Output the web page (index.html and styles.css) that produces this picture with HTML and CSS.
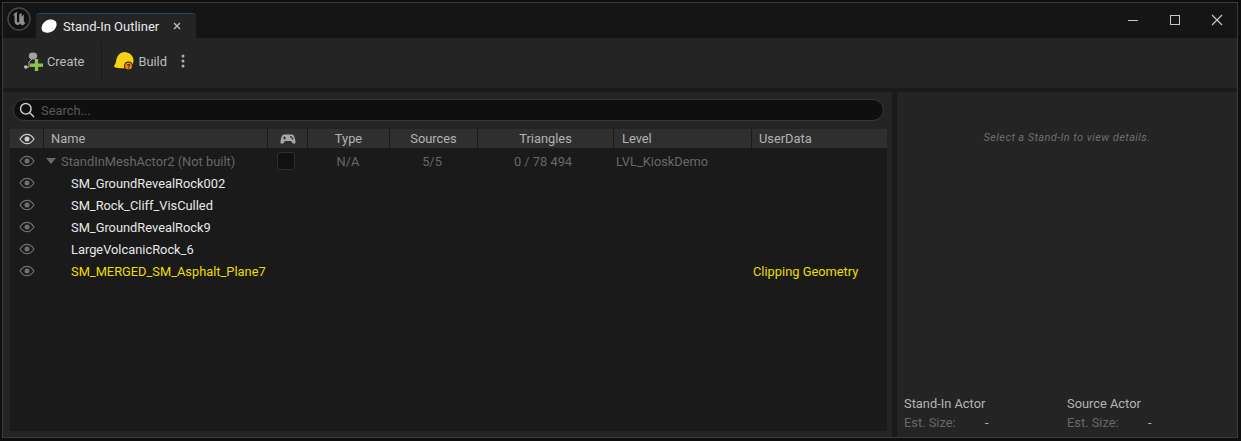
FILE: index.html
```html
<!DOCTYPE html>
<html lang="en">
<head>
<meta charset="utf-8">
<title>Stand-In Outliner</title>
<link rel="stylesheet" href="styles.css">
</head>
<body>
<svg class="defs" width="0" height="0" aria-hidden="true">
  <symbol id="eye" viewBox="0 0 16 12">
    <path d="M1 6C3 2.8 5.3 1.3 8 1.3S13 2.8 15 6C13 9.200 10.700 10.700 8 10.700S3 9.200 1 6Z" fill="none" stroke="currentColor" stroke-width="1.200"/>
    <circle cx="8" cy="6" r="2.500" fill="currentColor"/>
  </symbol>
</svg>
<div class="window">
  <header class="titlebar">
    <svg class="ue-logo" viewBox="0 0 24 24" aria-hidden="true">
      <circle cx="12" cy="12" r="11" fill="#111" stroke="#4a4a4a" stroke-width="1.400"/>
      <path d="M10.500 4.800C7.500 5.800 6 7.800 6.200 9.500C6.400 8.800 7 8.300 7.600 8V14.500C7.600 16.800 9.300 18.200 11 18C12 17.900 12.800 17.300 13.300 16.500L15 18.600C16.800 17.800 18 16.700 18.700 15.300C17.600 15.800 16.800 15.300 16.800 14V7.500C16 8 15.300 8.800 14.600 9.700V6.200C13.500 6.200 12.800 6.800 12.300 7.600V14.800C11.600 15.700 10.300 15.600 9.900 14.500V7C9.900 6 10.200 5.300 10.500 4.800Z" fill="#8f8f8f"/>
    </svg>
    <div class="tab">
      <svg class="tab-icon" viewBox="0 0 16 14" aria-hidden="true"><path d="M.6 10C.4 6 3.500 1.200 8.500.6C12 .2 15.800 1.500 15.600 5.500C15.400 9.800 11.500 13.700 6.500 13.700C3.300 13.700 .8 12.500 .6 10Z" fill="#fff"/></svg>
      <span class="tab-label">Stand-In Outliner</span>
      <svg class="tab-close" viewBox="0 0 8 8" aria-hidden="true"><path d="M1 1L7 7M7 1L1 7" stroke="#bdbdbd" stroke-width="1.400"/></svg>
    </div>
    <div class="window-buttons">
      <svg class="win-icon" viewBox="0 0 12 12" aria-hidden="true"><path d="M1 6.500H11" stroke="#c8c8c8" stroke-width="1"/></svg>
      <svg class="win-icon" viewBox="0 0 12 12" aria-hidden="true"><rect x="1.500" y="1.500" width="9" height="9" fill="none" stroke="#c8c8c8" stroke-width="1"/></svg>
      <svg class="win-icon" viewBox="0 0 12 12" aria-hidden="true"><path d="M1 1L11 11M11 1L1 11" stroke="#c8c8c8" stroke-width="1.200"/></svg>
    </div>
  </header>

  <nav class="toolbar">
    <button class="tool tool-create">
      <svg class="tool-icon" viewBox="0 0 20 20" aria-hidden="true">
        <path d="M3 16H6V11L9 8" fill="none" stroke="#a8a8a8" stroke-width="1"/>
        <circle cx="2.800" cy="16" r="1.800" fill="#c0c0c0"/>
        <ellipse cx="10" cy="5" rx="4.200" ry="3.400" fill="#a0a0a0"/>
        <rect x="7" y="12.500" width="13" height="3.400" fill="#8bc24a"/>
        <rect x="11.800" y="8" width="3.400" height="12" fill="#8bc24a"/>
      </svg>
      <span>Create</span>
    </button>
    <span class="tool-sep"></span>
    <button class="tool tool-build">
      <svg class="tool-icon" viewBox="0 0 20 20" aria-hidden="true">
        <path d="M0 15.500C-.2 14.500 1.500 13.500 2 11C2.500 5 6 1 10.500 1C15 1 19.500 4.500 19.500 9.500C19.500 14 16.500 17.300 12 17.300C7.500 17.300 .3 17.300 0 15.500Z" fill="#f6d116"/>
        <circle cx="14.500" cy="15" r="4.500" fill="#2a1d05"/>
        <circle cx="14.500" cy="15" r="3.500" fill="#ef8a12"/>
        <text x="14.500" y="17.600" class="badge-q">?</text>
      </svg>
      <span>Build</span>
    </button>
    <svg class="tool-more" viewBox="0 0 4 14" aria-hidden="true">
      <circle cx="2" cy="2" r="1.500" fill="#b0b0b0"/><circle cx="2" cy="7" r="1.500" fill="#b0b0b0"/><circle cx="2" cy="12" r="1.500" fill="#b0b0b0"/>
    </svg>
  </nav>

  <main class="panels">
    <section class="outliner">
      <div class="search">
        <svg class="search-icon" viewBox="0 0 16 16" aria-hidden="true"><circle cx="6.800" cy="6.800" r="5.300" fill="none" stroke="#d0d0d0" stroke-width="1.400"/><path d="M10.800 10.800L15 15" stroke="#d0d0d0" stroke-width="1.500"/></svg>
        <span class="search-text">Search...</span>
      </div>
      <div class="table">
        <div class="thead">
          <div class="th th-eye"><svg class="eye eye-head"><use href="#eye"/></svg></div>
          <div class="th th-left">Name</div>
          <div class="th">
            <svg class="pad" viewBox="0 0 16 12" aria-hidden="true"><path d="M4 1.500H12C14 1.500 15 5 15.500 8.500C15.800 10.800 13.500 11.500 12.300 9.800L11 8H5L3.700 9.800C2.500 11.500.2 10.800.5 8.500C1 5 2 1.500 4 1.500Z" fill="#a8a8a8"/><path d="M3 5H6M4.500 3.500V6.500" stroke="#2f2f2f"/><circle cx="11" cy="4" r=".9" fill="#2f2f2f"/><circle cx="12.500" cy="5.500" r=".9" fill="#2f2f2f"/></svg>
          </div>
          <div class="th">Type</div>
          <div class="th">Sources</div>
          <div class="th">Triangles</div>
          <div class="th th-left th-level">Level</div>
          <div class="th th-left">UserData</div>
        </div>
        <div class="tbody">
          <div class="row row-actor">
            <div class="cell-eye"><svg class="eye"><use href="#eye"/></svg></div>
            <div class="cell cell-actor"><span class="caret"></span>StandInMeshActor2 (Not built)</div>
            <div class="cell-center"><span class="checkbox"></span></div>
            <div class="cell-center">N/A</div>
            <div class="cell-center cell-sources">5/5</div>
            <div class="cell-center cell-tris">0 / 78 494</div>
            <div class="cell cell-level">LVL_KioskDemo</div>
            <div class="cell"></div>
          </div>
          <div class="row">
            <div class="cell-eye"><svg class="eye"><use href="#eye"/></svg></div>
            <div class="cell cell-child">SM_GroundRevealRock002</div>
          </div>
          <div class="row">
            <div class="cell-eye"><svg class="eye"><use href="#eye"/></svg></div>
            <div class="cell cell-child">SM_Rock_Cliff_VisCulled</div>
          </div>
          <div class="row">
            <div class="cell-eye"><svg class="eye"><use href="#eye"/></svg></div>
            <div class="cell cell-child">SM_GroundRevealRock9</div>
          </div>
          <div class="row">
            <div class="cell-eye"><svg class="eye"><use href="#eye"/></svg></div>
            <div class="cell cell-child">LargeVolcanicRock_6</div>
          </div>
          <div class="row row-clip">
            <div class="cell-eye"><svg class="eye"><use href="#eye"/></svg></div>
            <div class="cell cell-child">SM_MERGED_SM_Asphalt_Plane7</div>
            <div class="cell cell-userdata">Clipping Geometry</div>
          </div>
        </div>
      </div>
    </section>
    <aside class="details">
      <p class="hint">Select a Stand-In to view details.</p>
      <div class="stats">
        <div class="stat">
          <div class="stat-title">Stand-In Actor</div>
          <div class="stat-line"><span class="stat-key">Est. Size:</span><span>-</span></div>
        </div>
        <div class="stat">
          <div class="stat-title">Source Actor</div>
          <div class="stat-line"><span class="stat-key">Est. Size:</span><span>-</span></div>
        </div>
      </div>
    </aside>
  </main>
</div>
</body>
</html>
```
FILE: styles.css
```css
* { box-sizing: border-box; }
html, body { margin: 0; height: 100%; }
body {
  width: 1241px;
  height: 441px;
  overflow: hidden;
  background: #0e0e0e;
  font-family: Roboto, "Liberation Sans", sans-serif;
  font-size: 12.85px;
  color: #c0c0c0;
  padding: 2px 3px 2px 2px;
}
.defs { display: block; height: 0; }
.window {
  height: 436px;
  border: 1px solid #3a3a3a;
  background: #1a1a1a;
  display: flex;
  flex-direction: column;
}
.titlebar {
  height: 35px;
  flex: none;
  background: #151515;
  display: flex;
  align-items: flex-end;
  position: relative;
}
.ue-logo {
  position: absolute;
  left: 4px;
  top: 4px;
  width: 24px;
  height: 24px;
}
.tab {
  margin-left: 33px;
  width: 160px;
  height: 25px;
  background: #242424;
  border-top: 1px solid #14507f;
  border-radius: 4px 4px 0 0;
  display: flex;
  align-items: center;
  padding-left: 5px;
  color: #e8e8e8;
}
.tab-icon { width: 16px; height: 14px; flex: none; }
.tab-label { margin-left: 6px; font-size: 13px; }
.tab-close { width: 8px; height: 8px; margin-left: 14px; flex: none; }
.window-buttons {
  margin-left: auto;
  height: 33px;
  align-self: flex-start;
  display: flex;
  align-items: center;
  gap: 30px;
  padding-right: 14px;
}
.win-icon { width: 12px; height: 12px; display: block; }
.toolbar {
  height: 50px;
  flex: none;
  background: #242424;
  display: flex;
  align-items: center;
  padding: 0 0 4px 20px;
}
.tool {
  background: none;
  border: 0;
  padding: 0;
  font: inherit;
  color: #bdbdbd;
  display: flex;
  align-items: center;
}
.tool-create { gap: 4px; }
.tool-build { gap: 4px; }
.tool-icon { width: 20px; height: 20px; flex: none; overflow: visible; }
.tool-sep {
  width: 1px;
  height: 38px;
  background: #1a1a1a;
  margin: 0 12px 0 17px;
}
.badge-q { font: bold 7px Roboto, sans-serif; fill: #1c1200; text-anchor: middle; }
.tool-more { width: 4px; height: 14px; margin-left: 14px; }
.panels {
  flex: 1;
  min-height: 0;
  display: flex;
  gap: 5px;
  padding-top: 4px;
  background: #1a1a1a;
}
.outliner {
  width: 889px;
  flex: none;
  background: #242424;
  padding: 7px 5px 6px 7px;
  display: flex;
  flex-direction: column;
}
.search {
  height: 22px;
  margin: 0 3px 8px 3px;
  flex: none;
  background: #0f0f0f;
  border: 1px solid #383838;
  border-radius: 11px;
  display: flex;
  align-items: center;
  padding-left: 5px;
}
.search-icon { width: 16px; height: 16px; flex: none; }
.search-text { margin-left: 6px; color: #5a5a5a; }
.table { flex: 1; min-height: 0; display: flex; flex-direction: column; background: #1a1a1a; }
.thead, .row {
  display: grid;
  grid-template-columns: 33px 224px 40px 82px 88px 136px 138px 136px;
}
.thead { height: 19px; flex: none; background: #2f2f2f; }
.th {
  display: flex;
  align-items: center;
  justify-content: center;
  border-left: 1px solid #1a1a1a;
  color: #b4b4b4;
}
.th-eye { border-left: 0; color: #c8c8c8; }
.th-left { justify-content: flex-start; padding-left: 7px; }
.th-level { padding-left: 8px; }
.eye { width: 16px; height: 12px; display: block; color: #707070; }
.eye-head { color: #d0d0d0; }
.pad { width: 16px; height: 12px; }
.tbody { padding-top: 2px; }
.row { height: 22px; align-items: center; color: #e8e8e8; }
.cell-eye { display: flex; justify-content: center; }
.cell { white-space: nowrap; }
.cell-center { display: flex; justify-content: center; color: #686868; }
.cell-sources { padding-right: 2px; }
.cell-tris { padding-right: 4px; }
.row-actor { color: #686868; }
.cell-actor { display: flex; align-items: center; padding-left: 3px; }
.caret {
  width: 0;
  height: 0;
  border-left: 5.500px solid transparent;
  border-right: 5.500px solid transparent;
  border-top: 6px solid #686868;
  margin-right: 5px;
}
.checkbox {
  width: 18px;
  height: 18px;
  margin-right: 2px;
  background: #111;
  border: 1px solid #2f2f2f;
  border-radius: 3px;
}
.cell-level { padding-left: 3px; }
.cell-child { padding-left: 28px; }
.row-clip { color: #ecdf00; }
.cell-userdata { grid-column: 8; padding-left: 2px; }
.details {
  flex: 1;
  background: #242424;
  display: flex;
  flex-direction: column;
  justify-content: space-between;
  padding: 39px 0 5px 7px;
}
.hint {
  margin: 0;
  text-align: center;
  font-size: 11px;
  letter-spacing: .4px;
  font-style: italic;
  color: #6e6e6e;
  padding-right: 7px;
}
.stats { display: flex; }
.stat { width: 163px; }
.stat-title { color: #b4b4b4; line-height: 19px; }
.stat-line { color: #b4b4b4; line-height: 19px; display: flex; }
.stat-key { width: 81px; color: #686868; }
```
